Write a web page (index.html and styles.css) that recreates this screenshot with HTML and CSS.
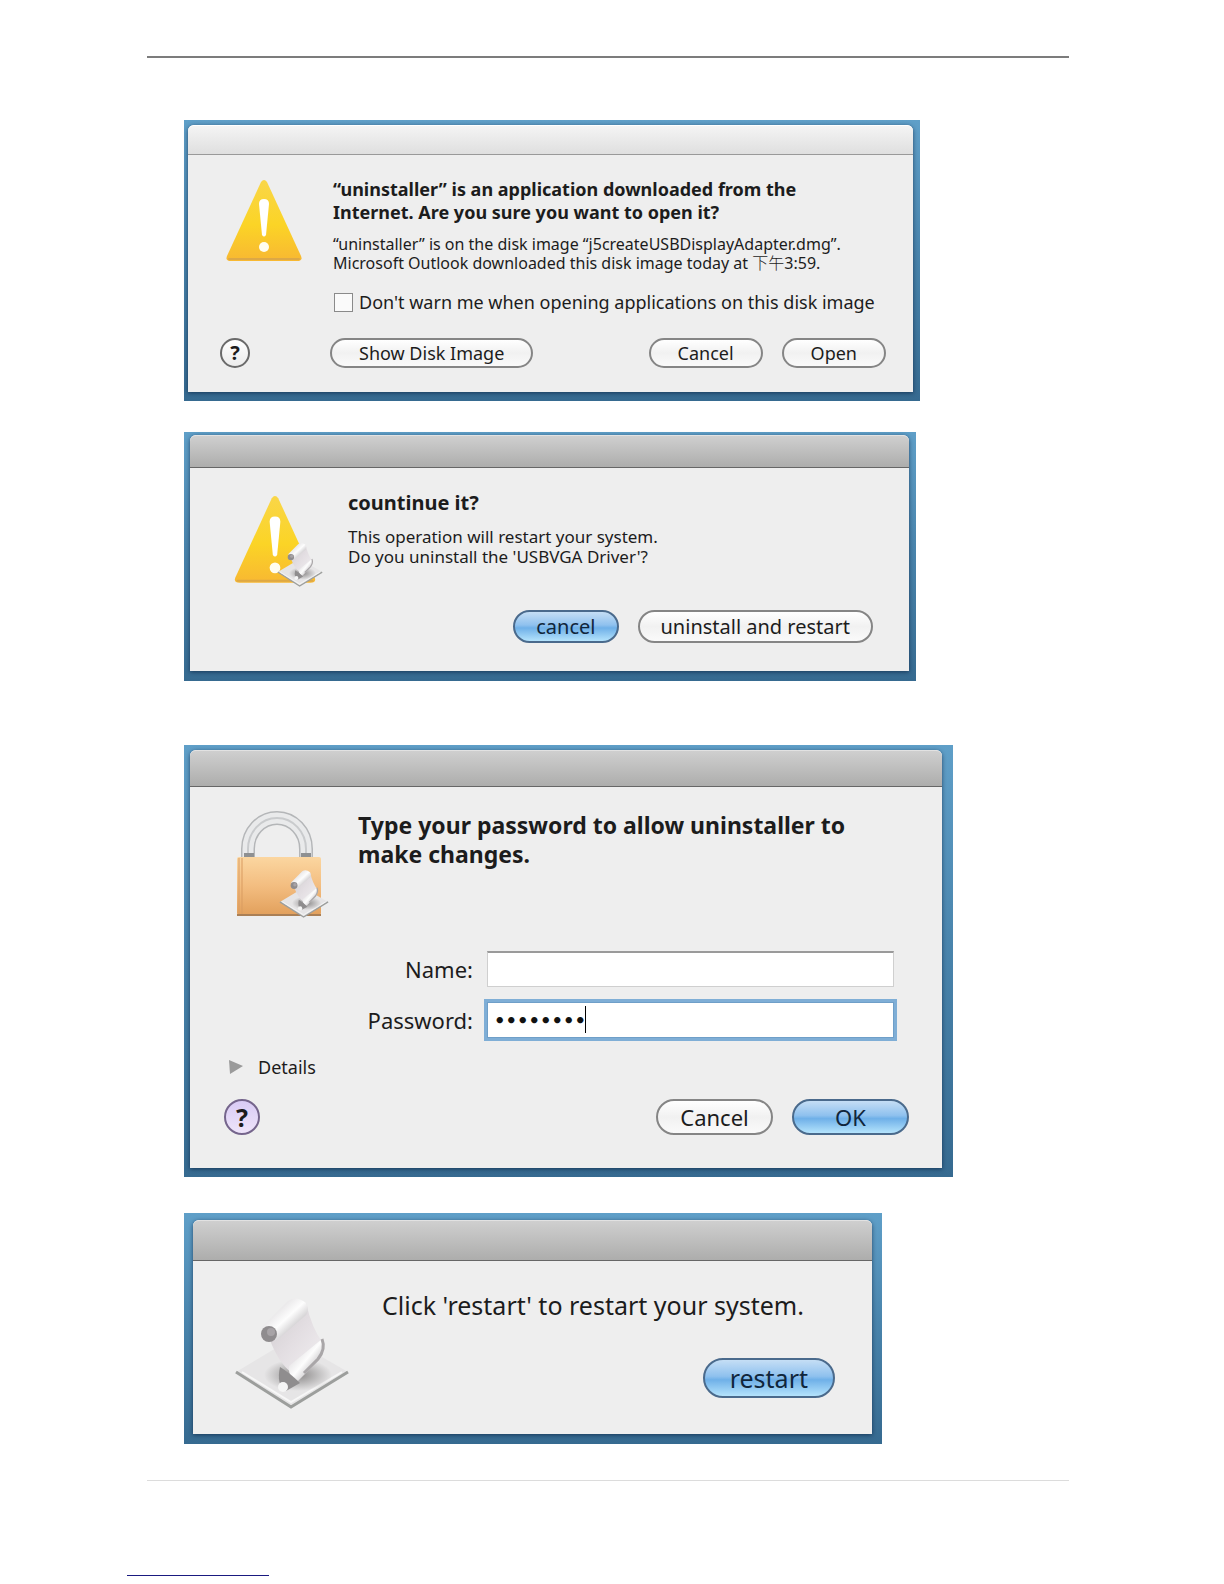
FILE: index.html
```html
<!DOCTYPE html>
<html lang="en">
<head>
  <meta charset="UTF-8">
  <title>Uninstall</title>
  <link rel="stylesheet" href="styles.css">
</head>
<body>
  <!-- shared icon shapes -->
  <svg class="defs" width="0" height="0" aria-hidden="true">
    <defs>
      <linearGradient id="yellow" x1="0" y1="0" x2="0" y2="1">
        <stop offset="0" stop-color="#f9d648"/>
        <stop offset="0.55" stop-color="#fbd426"/>
        <stop offset="1" stop-color="#f8b832"/>
      </linearGradient>
      <linearGradient id="paper" x1="0" y1="0" x2="1" y2="1">
        <stop offset="0" stop-color="#cfcbce"/>
        <stop offset="0.5" stop-color="#e3dee2"/>
        <stop offset="1" stop-color="#f2f0f2"/>
      </linearGradient>
      <linearGradient id="roll" x1="0" y1="0" x2="1" y2="1">
        <stop offset="0.2" stop-color="#dedcde"/>
        <stop offset="0.5" stop-color="#fdfdfd"/>
        <stop offset="0.8" stop-color="#b9b6b9"/>
      </linearGradient>
      <radialGradient id="shade">
        <stop offset="0" stop-color="#8b8989"/>
        <stop offset="1" stop-color="#8b8989" stop-opacity="0"/>
      </radialGradient>
      <linearGradient id="brass" x1="0" y1="0" x2="0" y2="1">
        <stop offset="0" stop-color="#fbd6a0"/>
        <stop offset="0.5" stop-color="#f3bd80"/>
        <stop offset="1" stop-color="#e2a05c"/>
      </linearGradient>
      <symbol id="warning" viewBox="0 0 76 84">
        <path d="M35 3Q38-1 41 3L75 77Q77 82 71 82H5Q-1 82 1 77Z" fill="url(#yellow)"/>
        <path d="M3 80H73" stroke="#dda845" stroke-width="2" stroke-linecap="round"/>
        <path d="M33 25Q33 20 38 20Q43 20 43 25L40 56Q38 59 36 56Z" fill="#fff"/>
        <circle cx="38" cy="68" r="5" fill="#fffdf0"/>
      </symbol>
      <symbol id="script" viewBox="0 0 116 120">
        <path d="M2 83L57 50L114 83L57 118Z" fill="#e6e5e6"/>
        <path d="M2 83L57 118L114 83" fill="none" stroke="#9c9e9c" stroke-width="3"/>
        <path d="M8 83L57 113L108 83" fill="none" stroke="#f7f7f7" stroke-width="2"/>
        <ellipse cx="64" cy="86" rx="34" ry="16" fill="url(#shade)"/>
        <path d="M34 46L72 14Q78 40 89 54L58 84Q44 74 34 46Z" fill="url(#paper)"/>
        <path d="M28 38L54 12Q62 6 72 14Q76 20 72 26L42 52Z" fill="url(#roll)"/>
        <circle cx="35" cy="45" r="8" fill="#8f8c8e"/>
        <circle cx="37" cy="43" r="4" fill="#a7a3a6"/>
        <path d="M55 77L88 50Q92 62 84 72L64 92Q54 90 55 77Z" fill="url(#roll)"/>
        <path d="M88 50Q92 60 84 70L70 84" fill="none" stroke="#a9a6a8" stroke-width="3"/>
        <path d="M46 78Q56 84 66 94L52 102Q42 96 46 78Z" fill="#8f8d8e"/>
        <circle cx="49" cy="98" r="5" fill="#f5f5f5"/>
      </symbol>
    </defs>
  </svg>

  <main class="page">
    <section class="screen screen-open">
      <div class="dialog">
        <div class="titlebar light"></div>
        <div class="content">
          <svg class="icon" viewBox="0 0 90 90" width="90" height="90" aria-hidden="true">
            <use href="#warning" x="6" y="1" width="76" height="84"/>
          </svg>
          <div class="message">
            <h2>“uninstaller” is an application downloaded from the<br>Internet. Are you sure you want to open it?</h2>
            <p>“uninstaller” is on the disk image “j5createUSBDisplayAdapter.dmg”.<br>Microsoft Outlook downloaded this disk image today at <span class="time">下午</span>3:59.</p>
            <label class="check"><input type="checkbox"> Don't warn me when opening applications on this disk image</label>
          </div>
          <button class="help" type="button">?</button>
          <div class="actions">
            <button class="btn first" type="button">Show Disk Image</button>
            <button class="btn" type="button">Cancel</button>
            <button class="btn" type="button">Open</button>
          </div>
        </div>
      </div>
    </section>

    <section class="screen screen-continue">
      <div class="dialog">
        <div class="titlebar"></div>
        <div class="content">
          <svg class="icon" viewBox="0 0 92 96" width="92" height="96" aria-hidden="true">
            <use href="#warning" x="2" y="4" width="82" height="90"/>
            <use href="#script" x="45" y="48" width="46" height="48"/>
          </svg>
          <div class="message">
            <h2>countinue it?</h2>
            <p>This operation will restart your system.<br>Do you uninstall the 'USBVGA Driver'?</p>
          </div>
          <div class="actions">
            <button class="btn blue" type="button">cancel</button>
            <button class="btn" type="button">uninstall and restart</button>
          </div>
        </div>
      </div>
    </section>

    <section class="screen screen-password">
      <div class="dialog">
        <div class="titlebar"></div>
        <div class="content">
          <svg class="icon" viewBox="0 0 96 112" width="96" height="112" aria-hidden="true">
            <path d="M12 48V38A29 31 0 0 1 70 38V48" fill="none" stroke="#b4b6b8" stroke-width="14"/>
            <path d="M12 48V38A29 31 0 0 1 70 38V48" fill="none" stroke="#e9eaeb" stroke-width="11"/>
            <path d="M12 48V38A29 31 0 0 1 70 38V48" fill="none" stroke="#c9cbcd" stroke-width="2"/>
            <path d="M8 48V42H18V48M65 48V42H75V48" fill="#8e9092"/>
            <rect x="1" y="46" width="84" height="58" rx="2" fill="url(#brass)"/>
            <path d="M3 47V103M6 47V103" stroke="#d99b61"/>
            <path d="M1 104H85" stroke="#aa7f55" stroke-width="2"/>
            <use href="#script" x="43" y="54" width="50" height="54"/>
          </svg>
          <div class="message">
            <h2>Type your password to allow uninstaller to<br>make changes.</h2>
          </div>
          <div class="fields">
            <label for="name">Name:</label>
            <input type="text" id="name">
            <label for="password">Password:</label>
            <div class="focused">
              <input type="password" id="password" value="password">
              <span class="caret"></span>
            </div>
          </div>
          <details>
            <summary><svg width="16" height="16" viewBox="0 0 16 16" aria-hidden="true"><path d="M1 1L15 7L2 15Z" fill="#9a9a9a"/></svg>Details</summary>
          </details>
          <button class="help purple" type="button">?</button>
          <div class="actions">
            <button class="btn" type="button">Cancel</button>
            <button class="btn blue" type="button">OK</button>
          </div>
        </div>
      </div>
    </section>

    <section class="screen screen-restart">
      <div class="dialog">
        <div class="titlebar"></div>
        <div class="content">
          <svg class="icon" viewBox="0 0 116 120" width="116" height="120" aria-hidden="true">
            <use href="#script" width="116" height="120"/>
          </svg>
          <div class="message">
            <p>Click 'restart' to restart your system.</p>
          </div>
          <div class="actions">
            <button class="btn blue" type="button">restart</button>
          </div>
        </div>
      </div>
    </section>
  </main>
  <footer>
    <a href="#" aria-label="Home"></a>
  </footer>
</body>
</html>
```

FILE: styles.css
```css
* {
  box-sizing: border-box;
}
body {
  margin: 0;
  background: #fff;
  color: #1c1c1c;
  font-family: "Noto Sans", "Noto Sans CJK TC", sans-serif;
}
.defs {
  position: absolute;
}
h2, p {
  margin: 0;
}
.page {
  margin: 56px 155px 0 147px;
  padding: 62px 0 36px 37px;
  border-top: 2px solid #7c7c7c;
  border-bottom: 1px solid #dcdcdc;
}

/* desktop behind each dialog */
.screen {
  padding: 5px 7px 9px 4px;
  background: linear-gradient(#5f9fc8, #4a85ad 45%, #366a90);
}
.screen-open {
  max-width: 736px;
}
.screen-continue {
  max-width: 732px;
  margin-top: 31px;
  padding: 3px 7px 10px 6px;
}
.screen-password {
  max-width: 769px;
  margin-top: 64px;
  padding: 5px 11px 9px 6px;
}
.screen-restart {
  max-width: 698px;
  margin-top: 36px;
  padding: 7px 10px 10px 9px;
}

.dialog {
  background: #eeeeee;
  border-radius: 6px 6px 0 0;
  box-shadow: 0 1px 4px rgba(0, 20, 50, 0.6);
}
.titlebar {
  height: 33px;
  border-radius: 6px 6px 0 0;
  border-top: 1px solid #e2e2e2;
  border-bottom: 1px solid #666;
  background: linear-gradient(#cfcfcf, #adadac);
}
.titlebar.light {
  height: 30px;
  border-top-color: #fff;
  border-bottom-color: #999;
  background: linear-gradient(#f4f4f4, #dfdfdf);
}
.screen-password .titlebar {
  height: 37px;
}
.screen-restart .titlebar {
  height: 41px;
}

.content {
  display: grid;
  grid-template-columns: 113px 1fr;
  padding: 23px 27px 24px 32px;
}
.icon {
  grid-column: 1;
}
.message, .actions {
  grid-column: 2;
}
.actions {
  display: flex;
  justify-content: flex-end;
  gap: 19px;
}
.first {
  margin-right: auto;
}

h2 {
  font-size: 18px;
  line-height: 23px;
}
.message p {
  margin-top: 11px;
  font-size: 16px;
  line-height: 19px;
}
.time {
  font-weight: 300;
}
.check {
  display: flex;
  align-items: center;
  gap: 6px;
  margin-top: 19px;
  font-size: 18px;
  line-height: 20px;
  white-space: nowrap;
}
.check input {
  appearance: none;
  width: 19px;
  height: 19px;
  margin: 0 0 0 1px;
  border: 1px solid #8a8a8a;
  background: #fafafa;
}

.btn {
  height: 30px;
  padding: 0 27px;
  border: 2px solid #858585;
  border-radius: 20px;
  background: linear-gradient(#fff, #f1f1f1 50%, #fafafa);
  color: #1c1c1c;
  font: 18px/20px "Noto Sans", sans-serif;
}
.btn.blue {
  border-color: #4a6a8c;
  background: linear-gradient(#c5def5, #8fc1ee 45%, #6fb0e8 55%, #b4e3fc);
  color: #10263c;
}
.help {
  width: 30px;
  height: 30px;
  padding: 0;
  border: 2px solid #6a6a6a;
  border-radius: 50%;
  background: linear-gradient(#fff, #ececec);
  color: #1c1c1c;
  font: bold 20px/20px "Noto Sans", sans-serif;
}
.help.purple {
  width: 36px;
  height: 36px;
  border-color: #75658c;
  background: linear-gradient(#d9cbf5, #eee4fa);
  font-size: 25px;
}

.screen-open .actions, .screen-open .help {
  margin-top: 26px;
}
.screen-open .actions {
  margin-left: -3px;
}

.screen-continue .content {
  grid-template-columns: 116px 1fr;
  padding: 23px 36px 28px 42px;
}
.screen-continue h2 {
  font-size: 20px;
}
.screen-continue .message p {
  margin-top: 13px;
  font-size: 17px;
  line-height: 20px;
}
.screen-continue .icon {
  grid-row: 1 / 3;
}
.screen-continue .actions {
  margin-top: 43px;
}
.screen-continue .btn {
  height: 33px;
  padding: 0 21px;
  font-size: 20px;
}

.screen-password .content {
  grid-template-columns: 122px 1fr;
  padding: 24px 33px 33px 46px;
}
.screen-password .icon {
  grid-row: 1;
}
.screen-password h2 {
  font-size: 23px;
  line-height: 29px;
}
.fields {
  grid-column: 2;
  display: grid;
  grid-template-columns: 115px 1fr;
  column-gap: 14px;
  row-gap: 15px;
  align-items: center;
  margin: 28px 15px 0 0;
  font-size: 22px;
  line-height: 29px;
}
.fields label {
  text-align: right;
}
.fields input {
  display: block;
  width: 100%;
  height: 36px;
  padding: 0 6px;
  border: 1px solid #cfcfcf;
  border-top: 2px solid #9a9a9a;
  background: #fff;
  color: #111;
  font: bold 18px "DejaVu Sans", sans-serif;
}
.focused {
  position: relative;
}
.fields .focused input {
  border: 1px solid #6f9fc8;
  outline: 3px solid #7faed6;
}
.caret {
  position: absolute;
  left: 98px;
  top: 4px;
  width: 1px;
  height: 27px;
  background: #000;
}
details {
  grid-column: 1 / 3;
  margin: 17px 0 0 -8px;
  font-size: 18px;
  line-height: 24px;
}
summary {
  display: flex;
  align-items: center;
  gap: 14px;
}
.screen-password .help {
  margin-left: -12px;
}
.screen-password .help, .screen-password .actions {
  margin-top: 20px;
}
.screen-password .btn {
  width: 117px;
  height: 36px;
  padding: 0;
  font-size: 22px;
}

.screen-restart .content {
  grid-template-columns: 148px 1fr;
  padding: 24px 37px 36px 41px;
}
/* the icon hangs below the button row */
.screen-restart .icon {
  grid-row: 1 / 3;
  margin: 4px 0 -20px;
}
.screen-restart .message p {
  margin-top: 8px;
  font-size: 25px;
  line-height: 24px;
}
.screen-restart .actions {
  margin-top: 41px;
}
.screen-restart .btn {
  height: 40px;
  padding: 0 25px;
  font-size: 25px;
}

footer {
  padding: 94px 127px 0;
}
footer a {
  display: block;
  width: 142px;
  border-bottom: 1px solid #1a1a80;
}
```
